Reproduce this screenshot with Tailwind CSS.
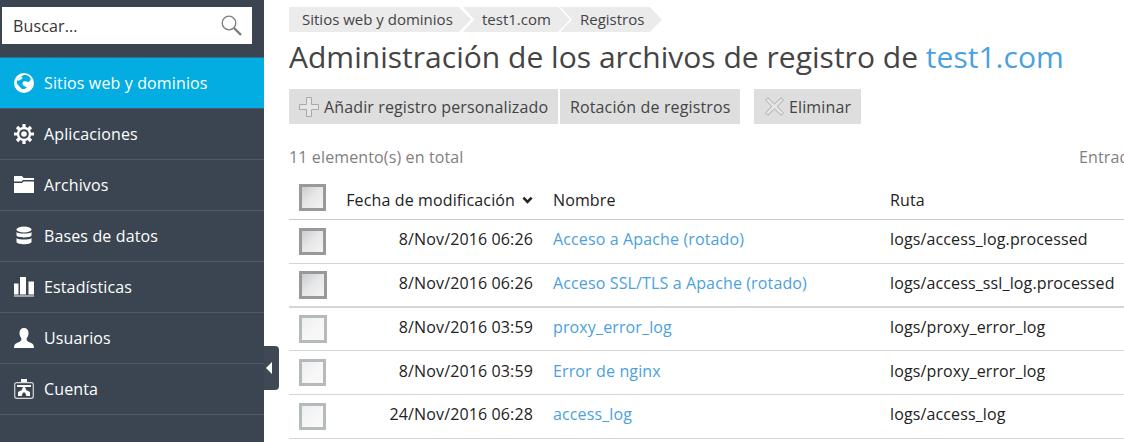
<!DOCTYPE html>
<html lang="es">
<head>
    <meta charset="UTF-8">
    <title>Registros</title>
    <script src="https://cdn.jsdelivr.net/npm/@tailwindcss/browser@4"></script>
</head>
<body class="w-[1124px] h-[442px] overflow-hidden bg-white font-['Open_Sans',sans-serif] text-base tracking-[0.13px] flex">
    <!-- sidebar -->
    <aside class="relative w-[264px] h-[442px] shrink-0 bg-[#3a4551] text-white">
        <div class="pt-[7px] pl-[2px] h-[57px]">
            <div class="w-[250px] h-[37px] bg-white flex items-center justify-between pl-[11px] pr-[10px] text-[#333]">
                <span>Buscar...</span>
                <svg class="w-[21px] h-[21px]" viewBox="0 0 21 21" fill="none" stroke="#7d7d7d">
                    <circle cx="8" cy="8" r="6.800" stroke-width="1.300"/>
                    <path d="M13 13l7 7" stroke-width="2.400"/>
                </svg>
            </div>
        </div>
        <nav>
            <a class="flex items-center h-[51px] pl-[14px] gap-[10px] bg-[#03ade2] border-t border-[#2f6f8f]">
                <svg class="w-5 h-5" viewBox="0 0 20 20">
                    <circle cx="10" cy="10" r="10" fill="#fff"/>
                    <path d="M9 2.500c2.500-1 6 0 7.500 2.500.5 2-.5 3.500-2.500 4-1.500-.5-3-1-4.500-.5-1 1-1.500 2.500-.5 3.500 1 1.500 3 1.500 4 2.500-1 1-3 2-5 1.500-2-1-2-3-4-4-1-1-1.500-2.500-1-4C4 5 6.500 3 9 2.500z" fill="#03ade2"/>
                    <path d="M5 4.500C7 3 8 3.500 8.500 5 7.500 6.500 6 7 4 8c-.5-1 0-2.500 1-3.500z" fill="#fff"/>
                </svg>
                <span>Sitios web y dominios</span>
            </a>
            <a class="flex items-center h-[51px] pl-[14px] gap-[10px] border-t border-[#4f5b68]">
                <svg class="w-5 h-5" viewBox="0 0 20 20">
                    <g stroke="#fff" stroke-width="3.200">
                        <path d="M10 0v20M0 10h20M3 3l14 14M17 3L3 17"/>
                    </g>
                    <circle cx="10" cy="10" r="7.200" fill="#fff"/>
                    <circle cx="10" cy="10" r="4.800" fill="#3a4551"/>
                    <circle cx="10" cy="10" r="2.800" fill="#fff"/>
                </svg>
                <span>Aplicaciones</span>
            </a>
            <a class="flex items-center h-[51px] pl-[14px] gap-[10px] border-t border-[#4f5b68]">
                <svg class="w-5 h-5" viewBox="0 0 20 20" fill="#fff">
                    <path d="M0 1h8l1.500 2H20v2H9L7.500 6.500H0z"/>
                    <path d="M0 8h8l1.500-1.500H20V18H0z"/>
                </svg>
                <span>Archivos</span>
            </a>
            <a class="flex items-center h-[51px] pl-[14px] gap-[10px] border-t border-[#4f5b68]">
                <svg class="w-5 h-5" viewBox="0 0 20 20" fill="#fff">
                    <ellipse cx="10" cy="3.500" rx="7.500" ry="3"/>
                    <path d="M2.500 6c1 2 14 2 15 0v3.500c-1 2.500-14 2.500-15 0z"/>
                    <path d="M2.500 12c1 2 14 2 15 0v4c-1 3-14 3-15 0z"/>
                </svg>
                <span>Bases de datos</span>
            </a>
            <a class="flex items-center h-[51px] pl-[14px] gap-[10px] border-t border-[#4f5b68]">
                <svg class="w-5 h-5" viewBox="0 0 20 20" fill="#fff">
                    <path d="M0 6.500h4.500v11H0zM6 0h6v17.500H6zM14.500 4.500H20v13h-5.500zM0 18.500h20v1H0z"/>
                </svg>
                <span>Estadísticas</span>
            </a>
            <a class="flex items-center h-[51px] pl-[14px] gap-[10px] border-t border-[#4f5b68]">
                <svg class="w-5 h-5" viewBox="0 0 20 20" fill="#fff">
                    <path d="M10 0c3 0 4.500 2 4.500 5 0 2.500-1 4.500-2 5.500 0 2 1 3 3.500 4 2 .8 4 1.500 4 5.500H0c0-4 2-4.700 4-5.500 2.500-1 3.500-2 3.500-4-1-1-2-3-2-5.500C5.500 2 7 0 10 0z"/>
                </svg>
                <span>Usuarios</span>
            </a>
            <a class="flex items-center h-[52px] pl-[14px] gap-[10px] border-t border-b border-[#4f5b68]">
                <svg class="w-5 h-5" viewBox="0 0 20 20" fill="#fff">
                    <rect x="7" y="0" width="6" height="3"/>
                    <rect x="0.700" y="3.700" width="18.600" height="15.600" rx="2" fill="none" stroke="#d8d8d8" stroke-width="1.200"/>
                    <rect x="3" y="6" width="14" height="2"/>
                    <path d="M10 8c1.500 0 2 1.500 2 3l4 2v4h-3.500L11 13.500H9L7.500 17H4v-4l4-2c0-1.500.5-3 2-3z"/>
                </svg>
                <span>Cuenta</span>
            </a>
        </nav>
        <!-- collapse handle sits over the edge of the sidebar -->
        <div class="absolute left-[264px] top-[346px] w-[15px] h-[44px] bg-[#3f4955] rounded-r-[4px] flex items-center pl-[2px]">
            <div class="w-0 h-0 border-y-[6px] border-y-transparent border-r-[6px] border-r-white"></div>
        </div>
    </aside>

    <!-- main -->
    <main class="pl-[25px] pt-[7px] flex-1 min-w-0 text-[#333]">
        <div class="flex h-[25px] text-[15px] leading-[25px] tracking-normal text-[#444]">
            <div class="bg-[#ebebeb] pl-[13px] h-[25px] w-[182px] [clip-path:polygon(0_0,170px_0,100%_50%,170px_100%,0_100%)]">Sitios web y dominios</div>
            <div class="bg-[#ebebeb] -ml-[8px] pl-[19px] h-[25px] w-[107px] [clip-path:polygon(0_0,95px_0,100%_50%,95px_100%,0_100%,11px_50%)]">test1.com</div>
            <div class="bg-[#ebebeb] -ml-[10px] pl-[20px] h-[25px] w-[102px] [clip-path:polygon(0_0,90px_0,100%_50%,90px_100%,0_100%,12px_50%)]">Registros</div>
        </div>
        <h1 class="mt-[6px] h-[51px] text-[30px] leading-[38px] tracking-[0.02px] text-[#444] whitespace-nowrap">Administración de los archivos de registro de <a class="text-[#4ba1e0]">test1.com</a></h1>
        <div class="flex h-[35px] text-[#444]">
            <button class="w-[269px] bg-[#dedede] flex items-center pl-[10px] gap-[5px]">
                <svg class="w-5 h-5" viewBox="0 0 20 20" fill="#e6e6e6" stroke="#a9a9a9">
                    <path d="M7.500.500h5v7h7v5h-7v7h-5v-7h-7v-5h7z"/>
                </svg>
                <span>Añadir registro personalizado</span>
            </button>
            <button class="ml-[2px] w-[180px] bg-[#dedede] flex items-center pl-[10px]">Rotación de registros</button>
            <button class="ml-[14px] w-[107px] bg-[#dedede] flex items-center pl-[11px] gap-[5px]">
                <svg class="w-[19px] h-[19px]" viewBox="0 0 20 20" fill="#e6e6e6" stroke="#a9a9a9">
                    <path d="M3 .800l7 6.700 7-6.700 2.500 2.500L12.700 10l6.800 6.700-2.500 2.500-7-6.700-7 6.700-2.500-2.500L7.300 10 .500 3.300z"/>
                </svg>
                <span>Eliminar</span>
            </button>
        </div>
        <div class="mt-[21px] h-[25px] w-[835px] flex justify-between leading-[24px] text-[#7f7f7f] whitespace-nowrap">
            <span>11 elemento(s) en total</span>
            <span class="w-[45px] overflow-hidden">Entrada</span>
        </div>

        <div class="w-[835px] text-[#222] whitespace-nowrap">
            <div class="flex items-start h-[50px] pt-[14px] border-b border-[#c5cbd0]">
                <span class="ml-[10px] w-[27px] h-[27px] shrink-0 border-[3px] border-[#999] bg-gradient-to-br from-[#c8ccd2] via-[#e8e8e8] to-[#f3f3f3]"></span>
                <span class="mt-[4px] w-[207px] h-6 leading-6 shrink-0 flex items-center justify-end gap-[7px]">Fecha de modificación
                    <svg class="w-[11px] h-[8px]" viewBox="0 0 12 8"><path d="M1.500 1.500L6 6l4.500-4.500" fill="none" stroke="#222" stroke-width="2.800"/></svg>
                </span>
                <span class="mt-[4px] h-6 leading-6 w-[357px] pl-[20px] shrink-0">Nombre</span>
                <span class="mt-[4px] h-6 leading-6">Ruta</span>
            </div>
            <div class="flex items-center h-[44px] border-b border-[#d5d5d5]">
                <span class="ml-[10px] w-[27px] h-[27px] shrink-0 border-[3px] border-[#999] bg-gradient-to-br from-[#c8ccd2] via-[#e8e8e8] to-[#f3f3f3]"></span>
                <span class="mb-[5px] w-[207px] shrink-0 text-right">8/Nov/2016 06:26</span>
                <a class="mb-[5px] w-[357px] pl-[20px] shrink-0 text-[#4ba1e0]">Acceso a Apache (rotado)</a>
                <span class="mb-[5px]">logs/access_log.processed</span>
            </div>
            <div class="flex items-center h-[44px] border-b-2 border-[#d5d5d5]">
                <span class="ml-[10px] w-[28px] h-[28px] shrink-0 border-[3px] border-[#999] bg-gradient-to-br from-[#c8ccd2] via-[#e8e8e8] to-[#f3f3f3]"></span>
                <span class="mb-[4px] w-[206px] shrink-0 text-right">8/Nov/2016 06:26</span>
                <a class="mb-[4px] w-[357px] pl-[20px] shrink-0 text-[#4ba1e0]">Acceso SSL/TLS a Apache (rotado)</a>
                <span class="mb-[4px]">logs/access_ssl_log.processed</span>
            </div>
            <div class="flex items-center h-[43px] border-b border-[#d5d5d5]">
                <span class="ml-[10px] w-[28px] h-[28px] shrink-0 border-[3px] border-[#b5babd] bg-gradient-to-br from-[#eceef0] via-[#f6f6f6] to-[#fafafa]"></span>
                <span class="mb-[4px] w-[206px] shrink-0 text-right">8/Nov/2016 03:59</span>
                <a class="mb-[4px] w-[357px] pl-[20px] shrink-0 text-[#4ba1e0]">proxy_error_log</a>
                <span class="mb-[4px]">logs/proxy_error_log</span>
            </div>
            <div class="flex items-center h-[44px] border-b border-[#d5d5d5]">
                <span class="ml-[10px] w-[27px] h-[27px] shrink-0 border-[3px] border-[#b5babd] bg-gradient-to-br from-[#eceef0] via-[#f6f6f6] to-[#fafafa]"></span>
                <span class="mb-[4px] w-[207px] shrink-0 text-right">8/Nov/2016 03:59</span>
                <a class="mb-[4px] w-[357px] pl-[20px] shrink-0 text-[#4ba1e0]">Error de nginx</a>
                <span class="mb-[4px]">logs/proxy_error_log</span>
            </div>
            <div class="flex items-center h-[44px] border-b border-[#d5d5d5]">
                <span class="ml-[10px] w-[27px] h-[27px] shrink-0 border-[3px] border-[#b5babd] bg-gradient-to-br from-[#eceef0] via-[#f6f6f6] to-[#fafafa]"></span>
                <span class="mb-[5px] w-[207px] shrink-0 text-right">24/Nov/2016 06:28</span>
                <a class="mb-[5px] w-[357px] pl-[20px] shrink-0 text-[#4ba1e0]">access_log</a>
                <span class="mb-[5px]">logs/access_log</span>
            </div>
        </div>
    </main>
</body>
</html>
